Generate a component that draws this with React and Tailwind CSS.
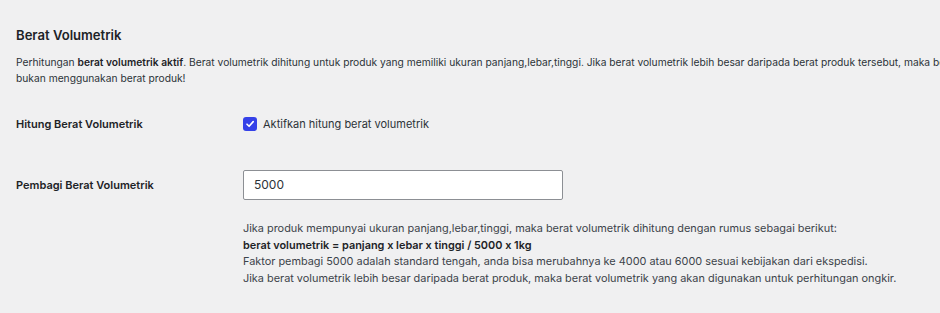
export default function App() {
  return (
    <div className="min-h-screen w-[940px] overflow-hidden bg-[#f0f0f1] pl-4 font-['Inter',sans-serif] text-[11px] text-[#3c434a] [font-feature-settings:'calt'_0]">
      <h2 className="pt-[25px] text-[13.1px] font-semibold leading-[20px] text-[#1d2327]">
        Berat Volumetrik
      </h2>
      <p className="mt-[9px] whitespace-nowrap text-[10.25px] leading-[16px] text-[#2c3338]">
        Perhitungan <b className="font-semibold text-[#1d2327]">berat volumetrik aktif</b>. Berat volumetrik dihitung untuk produk yang memiliki ukuran panjang,lebar,tinggi. Jika berat volumetrik lebih besar daripada berat produk tersebut, maka berat volumetrik yang akan digunakan sebagai berat pengiriman,
        <br />
        bukan menggunakan berat produk!
      </p>

      <div className="mt-[23px] flex h-[30px] items-center">
        <div className="w-[227px] font-semibold text-[#1d2327]">Hitung Berat Volumetrik</div>
        <label className="flex items-center gap-[6px] text-[#2c3338]">
          <span className="flex h-[14px] w-[14px] items-center justify-center rounded-[3px] bg-[#3541e8]">
            <svg width="10" height="10" viewBox="0 0 10 10" fill="none">
              <path d="M2 5.2 L4.1 7.3 L8.2 2.6" stroke="white" strokeWidth="1.6" strokeLinecap="round" strokeLinejoin="round" />
            </svg>
          </span>
          Aktifkan hitung berat volumetrik
        </label>
      </div>

      <div className="mt-[31px] flex h-[30px] items-center">
        <div className="w-[227px] font-semibold text-[#1d2327]">Pembagi Berat Volumetrik</div>
        <div className="flex h-[30px] w-[320px] items-center rounded-[2px] border border-[#8c8f94] bg-white px-[10px] text-[12px] text-[#2c3338]">
          5000
        </div>
      </div>

      <div className="ml-[227px] mt-[20px] text-[10.9px] leading-[16.5px] text-[#3c434a]">
        <p>Jika produk mempunyai ukuran panjang,lebar,tinggi, maka berat volumetrik dihitung dengan rumus sebagai berikut:</p>
        <p className="font-semibold text-[#1d2327]">berat volumetrik = panjang x lebar x tinggi / 5000 x 1kg</p>
        <p>Faktor pembagi 5000 adalah standard tengah, anda bisa merubahnya ke 4000 atau 6000 sesuai kebijakan dari ekspedisi.</p>
        <p>Jika berat volumetrik lebih besar daripada berat produk, maka berat volumetrik yang akan digunakan untuk perhitungan ongkir.</p>
      </div>
    </div>
  );
}
